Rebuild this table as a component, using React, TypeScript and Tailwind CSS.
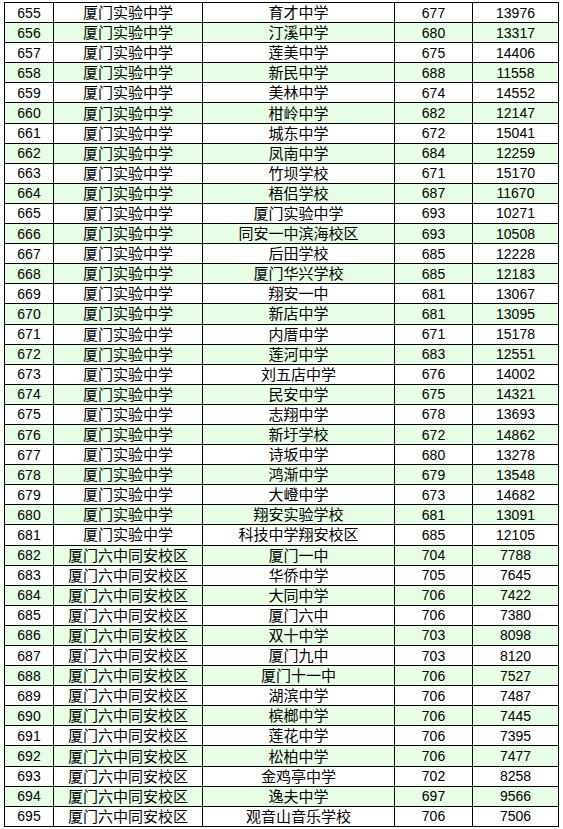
import React from "react";

// Admission rank table: id, origin school, target school, score, rank
type Row = [number, string, string, number, number];

const A = "厦门实验中学";
const B = "厦门六中同安校区";

const rows: Row[] = [
  [655, A, "育才中学", 677, 13976],
  [656, A, "汀溪中学", 680, 13317],
  [657, A, "莲美中学", 675, 14406],
  [658, A, "新民中学", 688, 11558],
  [659, A, "美林中学", 674, 14552],
  [660, A, "柑岭中学", 682, 12147],
  [661, A, "城东中学", 672, 15041],
  [662, A, "凤南中学", 684, 12259],
  [663, A, "竹坝学校", 671, 15170],
  [664, A, "梧侣学校", 687, 11670],
  [665, A, "厦门实验中学", 693, 10271],
  [666, A, "同安一中滨海校区", 693, 10508],
  [667, A, "后田学校", 685, 12228],
  [668, A, "厦门华兴学校", 685, 12183],
  [669, A, "翔安一中", 681, 13067],
  [670, A, "新店中学", 681, 13095],
  [671, A, "内厝中学", 671, 15178],
  [672, A, "莲河中学", 683, 12551],
  [673, A, "刘五店中学", 676, 14002],
  [674, A, "民安中学", 675, 14321],
  [675, A, "志翔中学", 678, 13693],
  [676, A, "新圩学校", 672, 14862],
  [677, A, "诗坂中学", 680, 13278],
  [678, A, "鸿渐中学", 679, 13548],
  [679, A, "大嶝中学", 673, 14682],
  [680, A, "翔安实验学校", 681, 13091],
  [681, A, "科技中学翔安校区", 685, 12105],
  [682, B, "厦门一中", 704, 7788],
  [683, B, "华侨中学", 705, 7645],
  [684, B, "大同中学", 706, 7422],
  [685, B, "厦门六中", 706, 7380],
  [686, B, "双十中学", 703, 8098],
  [687, B, "厦门九中", 703, 8120],
  [688, B, "厦门十一中", 706, 7527],
  [689, B, "湖滨中学", 706, 7487],
  [690, B, "槟榔中学", 706, 7445],
  [691, B, "莲花中学", 706, 7395],
  [692, B, "松柏中学", 706, 7477],
  [693, B, "金鸡亭中学", 702, 8258],
  [694, B, "逸夫中学", 697, 9566],
  [695, B, "观音山音乐学校", 706, 7506],
];

const cell = "border border-black p-0 text-center align-middle leading-none";
const cn = "text-[15px]";
const num = "text-[14px]";

export default function App() {
  return (
    <div className="w-[563px] h-[829px] bg-white pt-[2px] pl-[4px] text-black font-['Liberation_Sans','Noto_Sans_CJK_SC',sans-serif]">
      <table className="border-collapse table-fixed w-[554px]">
        <colgroup>
          <col className="w-[49px]" />
          <col className="w-[149px]" />
          <col className="w-[192px]" />
          <col className="w-[78px]" />
          <col className="w-[86px]" />
        </colgroup>
        <tbody>
          {rows.map(([id, from, to, score, rank]) => (
            <tr
              key={id}
              className={id % 2 === 0 ? "h-[20.1px] bg-[#e8fde6]" : "h-[20.1px] bg-white"}
            >
              <td className={`${cell} ${num}`}>{id}</td>
              <td className={`${cell} ${cn}`}>{from}</td>
              <td className={`${cell} ${cn}`}>{to}</td>
              <td className={`${cell} ${num}`}>{score}</td>
              <td className={`${cell} ${num}`}>{rank}</td>
            </tr>
          ))}
        </tbody>
      </table>
    </div>
  );
}
